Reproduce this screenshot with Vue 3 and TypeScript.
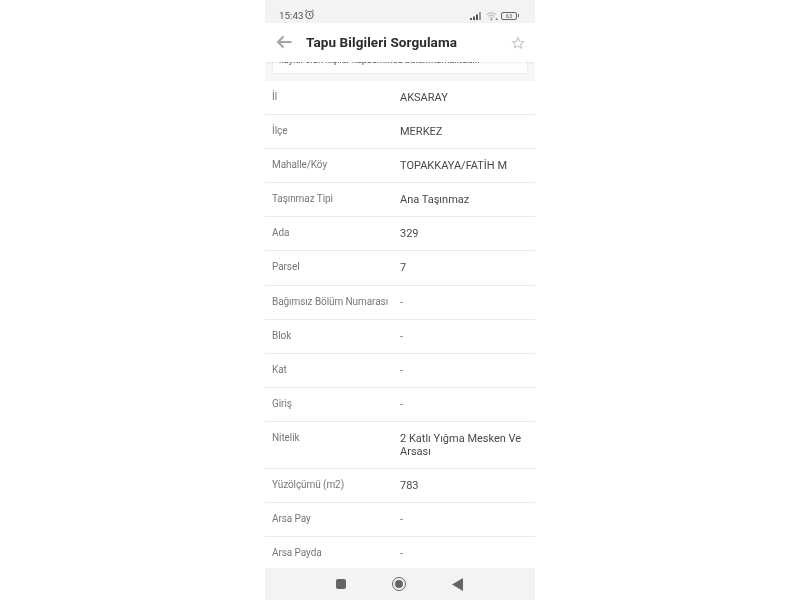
<template>
  <div class="phone">
    <div class="status-bar">
      <span class="time">15:43</span>
      <svg class="alarm" width="11" height="11" viewBox="0 0 11 11">
        <circle cx="5.5" cy="6" r="3.7" fill="none" stroke="#555" stroke-width="1" />
        <path d="M5.5 4v2.2l1.4.8M1 2.6 2.8 1M10 2.6 8.2 1" fill="none" stroke="#555" stroke-width="1" />
      </svg>
      <span class="spacer"></span>
      <svg width="12" height="8" viewBox="0 0 12 8">
        <rect x="0" y="6" width="2" height="2" fill="#555" />
        <rect x="3" y="4.5" width="2" height="3.5" fill="#555" />
        <rect x="6" y="2.5" width="2" height="5.500" fill="#555" />
        <rect x="9" y="0" width="2" height="8" fill="#999" />
      </svg>
      <svg class="wifi" width="12" height="10" viewBox="0 0 13 10">
        <path d="M.8 3.4a8 8 0 0 1 10.400 0M2.600 5.300a5.400 5.400 0 0 1 6.800 0M4.300 7a3 3 0 0 1 3.400 0" fill="none" stroke="#aaa" stroke-width="1" />
        <circle cx="6" cy="8.800" r="1" fill="#888" />
        <rect x="10.500" y="7.500" width="2" height="2" fill="#888" />
      </svg>
      <span class="battery"><span class="battery-text">63</span></span>
      <span class="battery-tip"></span>
    </div>

    <header class="app-header">
      <svg class="back" width="16" height="14" viewBox="0 0 16 14">
        <path d="M15.500 7H2M7.500 1.500 2 7l5.500 5.500" fill="none" stroke="#a3a3a3" stroke-width="2" />
      </svg>
      <h1>Tapu Bilgileri Sorgulama</h1>
      <svg class="star" width="14" height="14" viewBox="0 0 24 24">
        <path d="M12 2.500l2.900 6.400 7 .8-5.200 4.700 1.400 6.900L12 17l-6.100 3.300 1.400-6.900L2.100 9.700l7-.8z" fill="none" stroke="#c4c4c4" stroke-width="1.800" stroke-linejoin="round" />
      </svg>
    </header>

    <main class="content">
      <div class="notice-wrap">
        <div class="notice">
          <p>kayıtlı olan kişiler kapsamında bulunmamaktadır.</p>
        </div>
      </div>
      <div v-for="row in rows" :key="row.label" class="row" :class="{ tall: row.tall }">
        <span class="label">{{ row.label }}</span>
        <span class="value" :class="{ dash: row.value === '-' }">{{ row.value }}</span>
      </div>
    </main>

    <nav class="nav-bar">
      <span class="nav-square"></span>
      <span class="nav-circle"><span class="nav-dot"></span></span>
      <svg width="11" height="13" viewBox="0 0 11 13">
        <path d="M11 0v13L0 6.500z" fill="#666" />
      </svg>
    </nav>
  </div>
</template>

<script setup lang="ts">
interface Row {
  label: string
  value: string
  tall?: boolean
}

const rows: Row[] = [
  { label: 'İl', value: 'AKSARAY' },
  { label: 'İlçe', value: 'MERKEZ' },
  { label: 'Mahalle/Köy', value: 'TOPAKKAYA/FATİH M' },
  { label: 'Taşınmaz Tipi', value: 'Ana Taşınmaz' },
  { label: 'Ada', value: '329' },
  { label: 'Parsel', value: '7' },
  { label: 'Bağımsız Bölüm Numarası', value: '-' },
  { label: 'Blok', value: '-' },
  { label: 'Kat', value: '-' },
  { label: 'Giriş', value: '-' },
  { label: 'Nitelik', value: '2 Katlı Yığma Mesken Ve Arsası', tall: true },
  { label: 'Yüzölçümü (m2)', value: '783' },
  { label: 'Arsa Pay', value: '-' },
  { label: 'Arsa Payda', value: '-' },
]
</script>

<style>
html,
body {
  background: #fff;
}
</style>

<style scoped>
.phone {
  width: 270px;
  height: 600px;
  margin: 0 auto;
  display: flex;
  flex-direction: column;
  overflow: hidden;
  background: #fff;
  font-family: Roboto, "Liberation Sans", sans-serif;
  filter: blur(0.3px);
}

.status-bar {
  height: 23px;
  flex: none;
  box-sizing: border-box;
  padding: 8px 16px 0 14px;
  display: flex;
  align-items: center;
  gap: 1px;
  background: #f1f3f4;
  color: #555;
  font-size: 9.8px;
}

.alarm {
  margin-top: -2px;
}

.spacer {
  flex: 1;
}

.wifi {
  margin-left: 3px;
}

.battery {
  margin-left: 2px;
  width: 16px;
  height: 8px;
  box-sizing: border-box;
  border: 1px solid #666;
  border-radius: 2px;
  display: flex;
  align-items: center;
  justify-content: center;
}

.battery-text {
  font-size: 6px;
  line-height: 6px;
  color: #666;
}

.battery-tip {
  width: 1px;
  height: 3px;
  background: #666;
}

.app-header {
  height: 39px;
  flex: none;
  box-sizing: border-box;
  padding: 0 10px 1px 11px;
  display: flex;
  align-items: center;
  background: #fff;
  box-shadow: 0 1px 2px rgba(0, 0, 0, 0.08);
  position: relative;
  z-index: 1;
}

.app-header h1 {
  flex: 1;
  margin: 0 0 0 14px;
  font-size: 13.5px;
  font-weight: 700;
  color: #2b2b2b;
  letter-spacing: 0.1px;
}

.star {
  margin-top: 1px;
}

.content {
  flex: 1;
  min-height: 0;
  overflow: hidden;
}

.notice-wrap {
  height: 19px;
  box-sizing: border-box;
  padding: 0 7px;
  background: #f6f7f8;
}

.notice {
  height: 12px;
  overflow: hidden;
  background: #fff;
  border: 1px solid #ececec;
  border-top: 0;
  box-sizing: border-box;
}

.notice p {
  margin: -8px 0 0 6px;
  font-size: 9.3px;
  line-height: 12px;
  color: #555;
  white-space: nowrap;
}

.row {
  height: 34.100px;
  box-sizing: border-box;
  padding: 10px 0 0 7px;
  display: flex;
  border-bottom: 1px solid #ebebeb;
}

.row.tall {
  height: 47px;
}

.row:last-child {
  border-bottom: 0;
}

.label {
  width: 128px;
  flex: none;
  font-size: 10px;
  letter-spacing: -0.08px;
  line-height: 12px;
  color: #777;
  white-space: nowrap;
}

.value {
  flex: 1;
  padding-right: 8px;
  font-size: 11px;
  line-height: 13.500px;
  color: #484848;
}

.value.dash {
  color: #777;
}

.nav-bar {
  height: 32px;
  flex: none;
  display: flex;
  align-items: center;
  justify-content: center;
  gap: 46px;
  padding-right: 1px;
  background: #f1f3f4;
}

.nav-square {
  width: 10px;
  height: 10px;
  border-radius: 2px;
  background: #666;
}

.nav-circle {
  width: 14px;
  height: 14px;
  box-sizing: border-box;
  border: 1px solid #666;
  border-radius: 50%;
  display: flex;
  align-items: center;
  justify-content: center;
}

.nav-dot {
  width: 8px;
  height: 8px;
  border-radius: 50%;
  background: #666;
}
</style>
